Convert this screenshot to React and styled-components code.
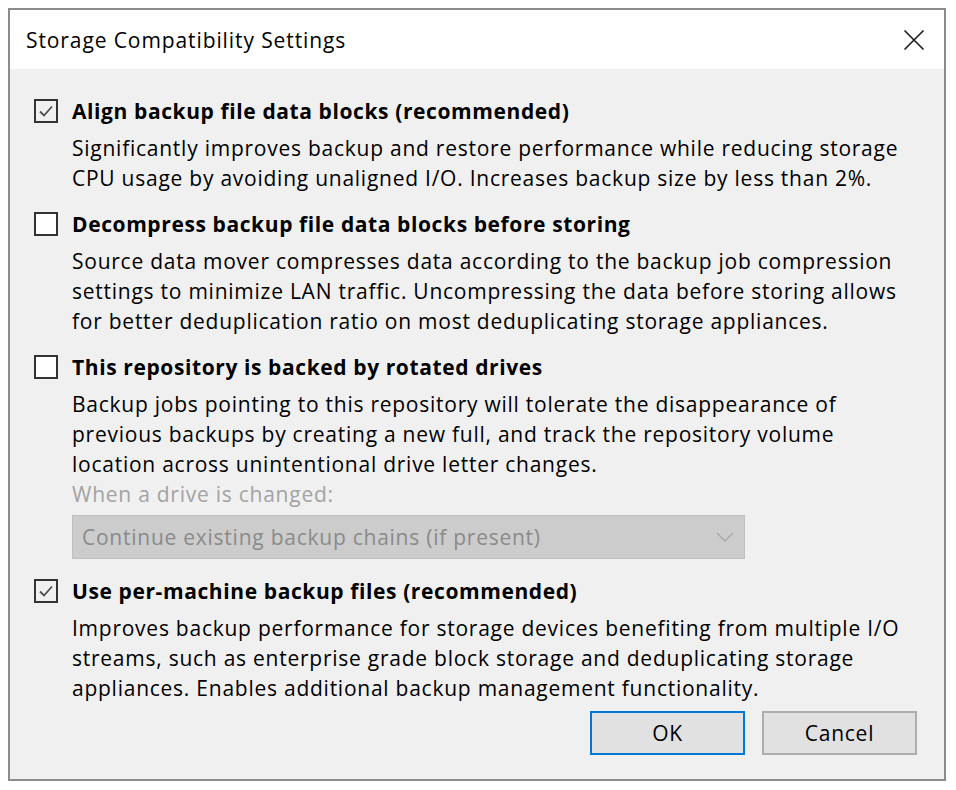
import React from "react";
import styled, { createGlobalStyle } from "styled-components";

const GlobalStyle = createGlobalStyle`
	body {
		margin: 0;
		background: #ffffff;
		font-family: "Open Sans", "Noto Sans", sans-serif;
		color: #000;
	}
`;

const Dialog = styled.div`
	margin: 8px 0 0 8px;
	width: 938px;
	height: 773px;
	box-sizing: border-box;
	border: 2px solid #8c8c8c;
	background: #f0f0f0;
	display: flex;
	flex-direction: column;
`;

const TitleBar = styled.div`
	height: 59px;
	background: #ffffff;
	display: flex;
	align-items: center;
	justify-content: space-between;
	padding: 0 18px 0 16px;
	font-size: 21px;
	letter-spacing: 0.9px;
`;

const CloseButton = styled.button`
	border: none;
	background: none;
	padding: 0;
	width: 24px;
	height: 24px;
	display: flex;
	align-items: center;
	justify-content: center;
	cursor: pointer;
`;

const Body = styled.div`
	flex: 1;
	padding: 27px 24px 0 24px;
	font-size: 21px;
	line-height: 30px;
	letter-spacing: 0.75px;
`;

const Section = styled.div`
	margin-bottom: ${(p) => p.$gap ?? 16}px;
`;

const OptionRow = styled.label`
	display: flex;
	align-items: center;
	gap: 14px;
	font-weight: 700;
	letter-spacing: 0.6px;
	cursor: pointer;
`;

const Box = styled.span`
	width: 24px;
	height: 24px;
	box-sizing: border-box;
	border: 2px solid #333333;
	background: ${(p) => (p.$checked ? "#f0f0f0" : "#ffffff")};
	display: flex;
	align-items: center;
	justify-content: center;
	flex-shrink: 0;
`;

const Desc = styled.div`
	margin: ${(p) => (p.$disabled ? 0 : 7)}px 0 0 38px;
	color: ${(p) => (p.$disabled ? "#a3a3a3" : "#000")};
`;

const Combo = styled.div`
	margin: 6px 0 0 38px;
	width: 673px;
	height: 44px;
	box-sizing: border-box;
	background: #cccccc;
	border: 1px solid #bfbfbf;
	color: #8a8a8a;
	display: flex;
	align-items: center;
	justify-content: space-between;
	padding: 0 10px 0 9px;
`;

const Buttons = styled.div`
	display: flex;
	justify-content: flex-end;
	gap: 17px;
	margin-top: 8px;
	padding-right: 3px;
`;

const Button = styled.button`
	width: 155px;
	height: 44px;
	box-sizing: border-box;
	background: #e1e1e1;
	border: ${(p) => (p.$primary ? "2px solid #0078d7" : "2px solid #adadad")};
	font-family: inherit;
	font-size: 21px;
	letter-spacing: 0.75px;
	color: #000;
	padding: 0;
	cursor: pointer;
`;

const Check = ({ checked }) => (
	<Box $checked={checked}>
		{checked && (
			<svg width="16" height="16" viewBox="0 0 16 16">
				<path d="M2 8.5 L6 12.5 L14 3.5" fill="none" stroke="#4d4d4d" strokeWidth="1.8" />
			</svg>
		)}
	</Box>
);

const options = [
	{
		title: "Align backup file data blocks (recommended)",
		checked: true,
		text: [
			"Significantly improves backup and restore performance while reducing storage",
			"CPU usage by avoiding unaligned I/O. Increases backup size by less than 2%.",
		],
	},
	{
		title: "Decompress backup file data blocks before storing",
		checked: false,
		text: [
			"Source data mover compresses data according to the backup job compression",
			"settings to minimize LAN traffic. Uncompressing the data before storing allows",
			"for better deduplication ratio on most deduplicating storage appliances.",
		],
	},
];

export default function App() {
	return (
		<>
			<GlobalStyle />
			<Dialog>
				<TitleBar>
					<span>Storage Compatibility Settings</span>
					<CloseButton aria-label="Close">
						<svg width="22" height="22" viewBox="0 0 22 22">
							<path d="M1.5 1.5 L20.5 20.5 M20.5 1.5 L1.5 20.5" stroke="#1a1a1a" strokeWidth="1.6" />
						</svg>
					</CloseButton>
				</TitleBar>
				<Body>
					{options.map((o) => (
						<Section key={o.title}>
							<OptionRow>
								<Check checked={o.checked} />
								{o.title}
							</OptionRow>
							<Desc>
								{o.text.map((t) => (
									<div key={t}>{t}</div>
								))}
							</Desc>
						</Section>
					))}
					<Section $gap={17}>
						<OptionRow>
							<Check checked={false} />
							This repository is backed by rotated drives
						</OptionRow>
						<Desc>
							<div>Backup jobs pointing to this repository will tolerate the disappearance of</div>
							<div>previous backups by creating a new full, and track the repository volume</div>
							<div>location across unintentional drive letter changes.</div>
						</Desc>
						<Desc $disabled>When a drive is changed:</Desc>
						<Combo>
							<span>Continue existing backup chains (if present)</span>
							<svg width="18" height="10" viewBox="0 0 18 10">
								<path d="M1 1 L9 9 L17 1" fill="none" stroke="#a8a8a8" strokeWidth="1.3" />
							</svg>
						</Combo>
					</Section>
					<Section $gap={0}>
						<OptionRow>
							<Check checked />
							Use per-machine backup files (recommended)
						</OptionRow>
						<Desc>
							<div>Improves backup performance for storage devices benefiting from multiple I/O</div>
							<div>streams, such as enterprise grade block storage and deduplicating storage</div>
							<div>appliances. Enables additional backup management functionality.</div>
						</Desc>
					</Section>
					<Buttons>
						<Button $primary>OK</Button>
						<Button>Cancel</Button>
					</Buttons>
				</Body>
			</Dialog>
		</>
	);
}
